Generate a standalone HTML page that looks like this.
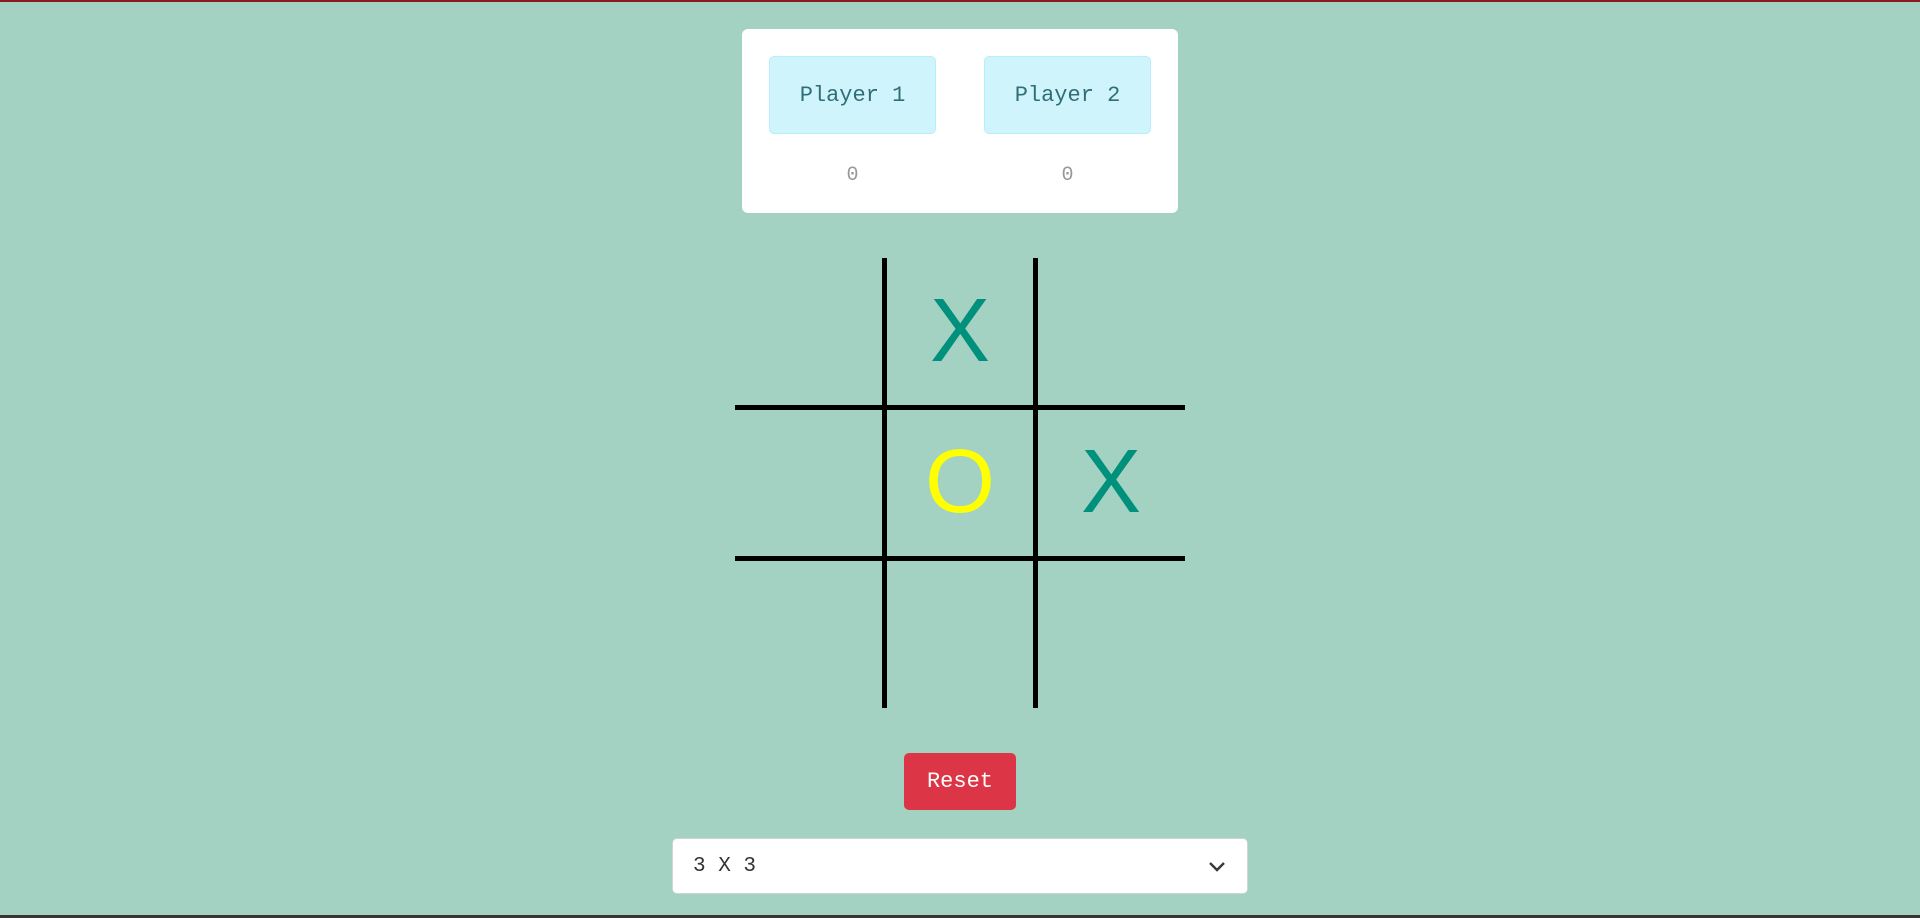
<!DOCTYPE html>
<html><head><style>
html,body{margin:0;padding:0;width:1920px;height:918px;overflow:hidden;background:#a3d1c2;font-family:"Liberation Mono",monospace;position:relative}
.top{position:absolute;left:0;top:0;width:1920px;height:2px;background:#8b1c1c}
.card{position:absolute;left:742px;top:29px;width:436px;height:184px;background:#fff;border-radius:6px}
.pb{position:absolute;top:27px;width:165px;height:76px;background:#cff4fc;border:1px solid #b6effb;border-radius:5px;color:#2f6e76;font-size:22px;line-height:78px;text-align:center}
.sc{position:absolute;top:134px;width:167px;text-align:center;color:#999;font-size:20px;line-height:26px}
.v{position:absolute;width:5px;background:#000;top:258px;height:450px}
.h{position:absolute;height:5px;background:#000;left:735px;width:450px}
.m{position:absolute;width:150px;height:150px;text-align:center;line-height:150px;font-family:"Liberation Sans",sans-serif;font-size:90px}
.reset{position:absolute;left:904px;top:753px;width:112px;height:57px;background:#dc3545;border-radius:5px;color:#fff;font-size:22px;line-height:58px;text-align:center}
.sel{position:absolute;left:672px;top:838px;width:574px;height:54px;background:#fff;border:1px solid #ced4da;border-radius:5px;font-size:21px;line-height:56px;color:#333}
.bot{position:absolute;left:0;top:915px;width:1920px;height:3px;background:#3a3434}
</style></head><body>
<div class="top"></div>
<div class="card">
 <div class="pb" style="left:27px">Player 1</div>
 <div class="pb" style="left:242px">Player 2</div>
 <div class="sc" style="left:27px">0</div>
 <div class="sc" style="left:242px">0</div>
</div>
<div class="v" style="left:882px"></div>
<div class="v" style="left:1033px"></div>
<div class="h" style="top:405px"></div>
<div class="h" style="top:556px"></div>
<div class="m" style="left:885px;top:256px;color:#00917c">X</div>
<div class="m" style="left:885px;top:407px;color:#ffff00">O</div>
<div class="m" style="left:1036px;top:407px;color:#00917c">X</div>
<div class="reset">Reset</div>
<div class="sel"><span style="position:absolute;left:20px">3 X 3</span>
<svg style="position:absolute;left:535px;top:21px" width="18" height="12" viewBox="0 0 18 12"><path d="M2 3l7 7 7-7" fill="none" stroke="#343a40" stroke-width="2.4"/></svg></div>
<div class="bot"></div>
</body></html>
